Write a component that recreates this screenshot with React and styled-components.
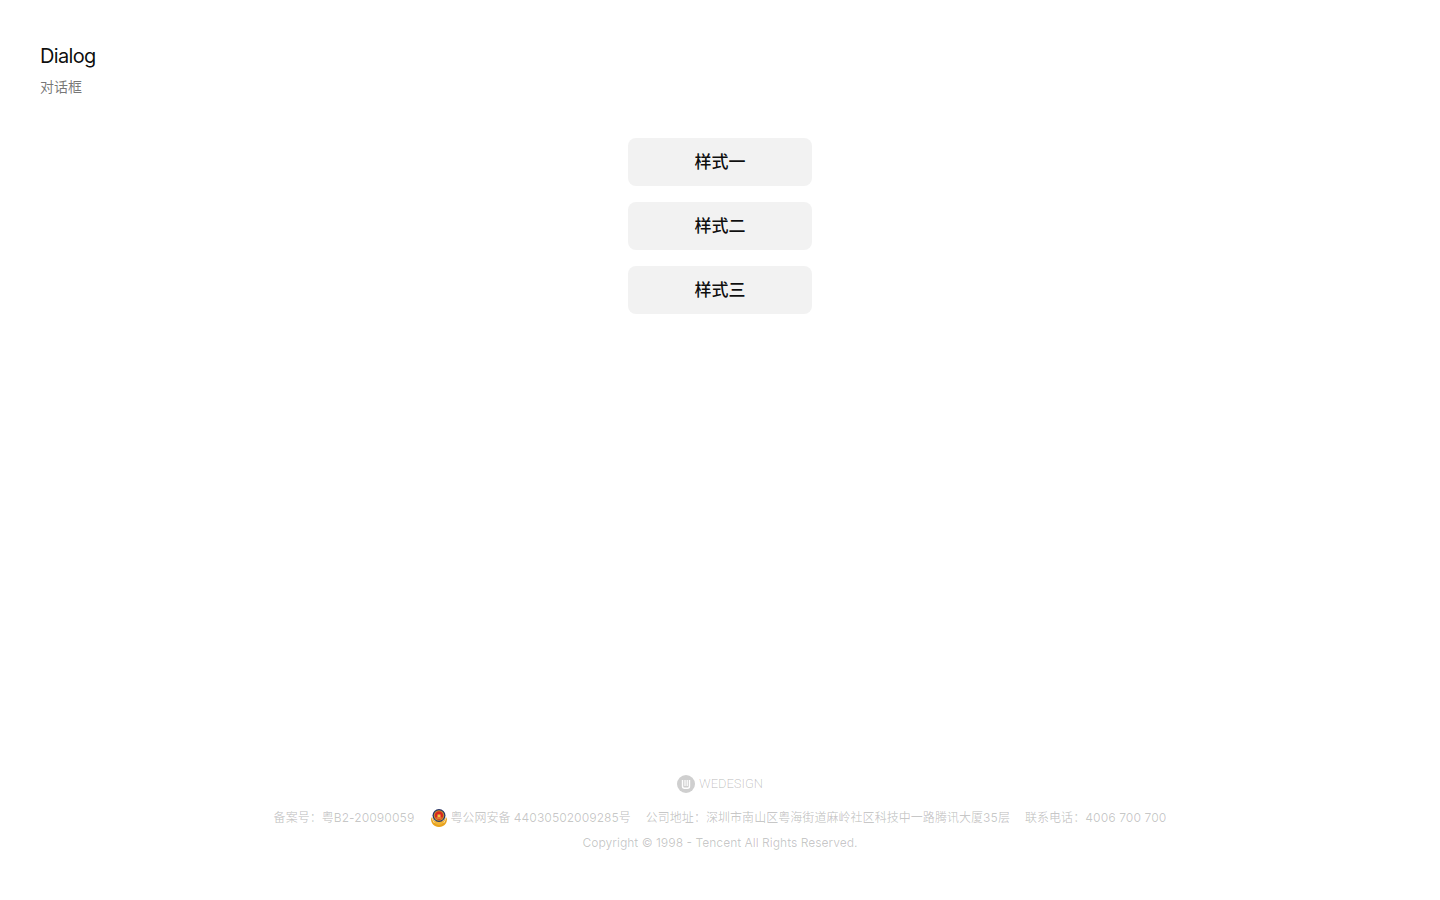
import React from "react";
import styled, { createGlobalStyle } from "styled-components";

const Global = createGlobalStyle`
  html, body { margin: 0; padding: 0; background: #fff; }
  body { font-family: Inter, "Noto Sans CJK SC", sans-serif; }
`;
const Page = styled.div`
  width: 1440px;
  height: 900px;
  display: flex;
  flex-direction: column;
  overflow: hidden;
`;
const Header = styled.header`
  padding: 44px 40px 0;
`;
const Title = styled.h1`
  margin: 0;
  font-size: 20px;
  line-height: 24px;
  font-weight: 400;
  letter-spacing: -0.68px;
  color: rgba(0, 0, 0, 0.95);
`;
const Subtitle = styled.p`
  margin: 9px 0 0;
  font-size: 14px;
  line-height: 19px;
  color: rgba(0, 0, 0, 0.55);
`;
const Buttons = styled.main`
  margin-top: 42px;
  display: flex;
  flex-direction: column;
  align-items: center;
  gap: 16px;
`;
const Button = styled.button`
  width: 184px;
  height: 48px;
  border: 0;
  border-radius: 8px;
  background: #f2f2f2;
  color: rgba(0, 0, 0, 0.95);
  font-family: inherit;
  font-size: 17px;
  font-weight: 500;
  padding: 0 0 3px;
`;
const Footer = styled.footer`
  margin-top: auto;
  padding-bottom: 47px;
  display: flex;
  flex-direction: column;
  align-items: center;
  color: rgba(0, 0, 0, 0.22);
  font-size: 12px;
  line-height: 20px;
`;
const Brand = styled.div`
  display: flex;
  align-items: center;
  gap: 4px;
  height: 20px;
  margin: 0 0 14px;
`;
const BrandName = styled.span`
  font-family: Roboto, sans-serif;
  font-size: 13px;
  font-weight: 300;
  letter-spacing: -0.05px;
  color: rgba(0, 0, 0, 0.22);
`;
const Legal = styled.div`
  display: flex;
  align-items: center;
  gap: 15px;
  height: 20px;
  letter-spacing: 0.05px;
`;
const Item = styled.span`
  display: flex;
  align-items: center;
`;
const PoliceItem = styled(Item)`
  gap: 3px;
  letter-spacing: 0;
`;
const Copyright = styled.div`
  margin-top: 5px;
`;

const WeLogo = () => (
  <svg width="18" height="18" viewBox="0 0 18 18">
    <circle cx="9" cy="9" r="9" fill="#cfcfcf" />
    <path d="M5.5 5V11.2Q5.5 13.2 7.5 13.2H10.5Q12.5 13.2 12.5 11.2V5" fill="none" stroke="#fff" strokeWidth="1.4" />
    <path d="M8 5V11M10.2 5V11" fill="none" stroke="#fff" strokeWidth="1.2" />
  </svg>
);
const Badge = () => (
  <svg width="18" height="20" viewBox="-2 0 18 20">
    <path d="M0 9Q-0.5 16 4 18Q8 20 12 18Q16.500 16 16 9L13 15H3Z" fill="#e8a21c" />
    <path d="M1 9Q2 16 8 17Q14 16 15 9L12 13H4Z" fill="#f0b437" />
    <circle cx="8" cy="7.500" r="6.500" fill="#2a3566" />
    <circle cx="8" cy="7.500" r="5.200" fill="#c8962e" />
    <circle cx="8" cy="7.500" r="4.200" fill="#d8281f" />
    <path d="M5.500 9.500H10.500V10.500H5.500ZM6.500 6.500H9.500V9H6.500Z" fill="#f2c84b" />
  </svg>
);

export default function App() {
  return (
    <Page>
      <Global />
      <Header>
        <Title>Dialog</Title>
        <Subtitle>对话框</Subtitle>
      </Header>
      <Buttons>
        <Button>样式一</Button>
        <Button>样式二</Button>
        <Button>样式三</Button>
      </Buttons>
      <Footer>
        <Brand>
          <WeLogo />
          <BrandName>WEDESIGN</BrandName>
        </Brand>
        <Legal>
          <Item>备案号：粤B2-20090059</Item>
          <PoliceItem><Badge />粤公网安备 44030502009285号</PoliceItem>
          <Item>公司地址：深圳市南山区粤海街道麻岭社区科技中一路腾讯大厦35层</Item>
          <Item>联系电话：4006 700 700</Item>
        </Legal>
        <Copyright>Copyright © 1998 - Tencent All Rights Reserved.</Copyright>
      </Footer>
    </Page>
  );
}
